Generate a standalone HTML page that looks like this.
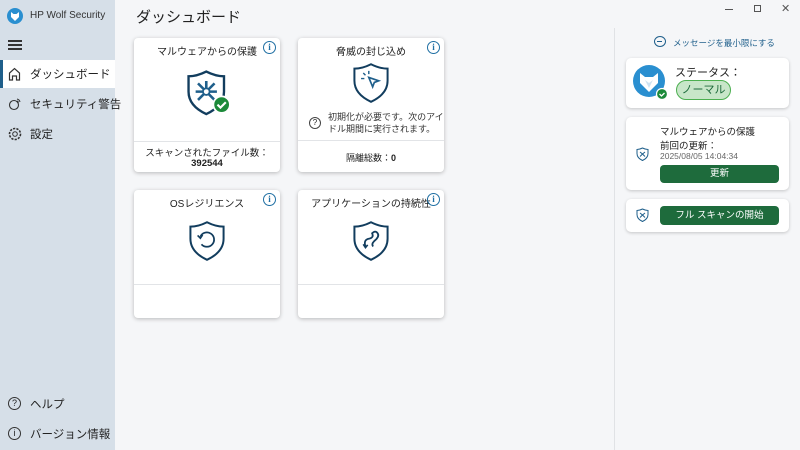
<!DOCTYPE html>
<html><head><meta charset="utf-8"><style>
*{margin:0;padding:0;box-sizing:border-box}
body{width:800px;height:450px;overflow:hidden;background:#f5f6f8;font-family:"Liberation Sans","Noto Sans CJK JP",sans-serif;color:#222;position:relative}
.side{position:absolute;left:0;top:0;width:115px;height:450px;background:#d6dfe8}
.abs{position:absolute}
.nav{position:absolute;left:0;width:115px;height:28px;font-size:11.5px;display:flex;align-items:center;padding-left:30px;white-space:nowrap}
.card{position:absolute;background:#fff;border-radius:4px;box-shadow:0 1px 4px rgba(0,0,0,.25)}
.ttl{position:absolute;top:5px;left:0;right:0;text-align:center;font-size:10px}
.info{position:absolute;right:4px;top:3px;width:13px;height:13px;border:1.3px solid #1f6fa3;border-radius:50%;color:#1f6fa3;font-size:9px;font-weight:bold;text-align:center;line-height:11px;font-family:"Liberation Serif",serif}
.div{position:absolute;left:0;right:0;height:1px;background:#e2e4e7}
.rc{position:absolute;left:626px;width:163px;background:#fff;border-radius:5px;box-shadow:0 1px 3px rgba(0,0,0,.2)}
.btn{position:absolute;background:#1e6b3c;color:#fff;border-radius:4px;font-size:9.5px;text-align:center}
</style></head><body>
<div class="side">
 <svg class="abs" style="left:7px;top:8px" width="16" height="16" viewBox="0 0 16 16"><circle cx="8" cy="8" r="8" fill="#2a8fd0"/><path d="M4 4l2.5 2h3L12 4v5l-4 4-4-4z" fill="#fff"/></svg>
 <div class="abs" style="left:30px;top:10px;font-size:10px;color:#333">HP Wolf Security</div>
 <div class="abs" style="left:8px;top:40px;width:14px;height:2px;background:#333;box-shadow:0 4px 0 #333,0 8px 0 #333"></div>
 <div class="nav" style="top:60px;background:#fff;border-left:3px solid #1f5f8b;padding-left:27px">ダッシュボード</div>
 <svg class="abs" style="left:8px;top:67px" width="13" height="14" viewBox="0 0 13 14"><path d="M1.5 13V6L6.5 1.5 11.5 6V13H8.5V9H4.5V13Z" fill="none" stroke="#333" stroke-width="1.2"/></svg>
 <div class="nav" style="top:90px">セキュリティ警告</div>
 <svg class="abs" style="left:8px;top:97px" width="14" height="14" viewBox="0 0 14 14"><circle cx="6" cy="8" r="4.5" fill="none" stroke="#333" stroke-width="1.1"/><path d="M9 2a4 4 0 0 1 3 3M9 4a2 2 0 0 1 1.5 1.5" fill="none" stroke="#333"/></svg>
 <div class="nav" style="top:120px">設定</div>
 <svg class="abs" style="left:8px;top:127px" width="14" height="14" viewBox="0 0 14 14"><circle cx="7" cy="7" r="2.3" fill="none" stroke="#333"/><circle cx="7" cy="7" r="5.5" fill="none" stroke="#333" stroke-dasharray="2.2 1.2" stroke-width="1.6"/></svg>
 <div class="nav" style="top:390px">ヘルプ</div>
 <div class="abs" style="left:8px;top:397px;width:13px;height:13px;border:1.2px solid #333;border-radius:50%;font-size:9px;text-align:center;line-height:11px">?</div>
 <div class="nav" style="top:420px">バージョン情報</div>
 <div class="abs" style="left:8px;top:427px;width:13px;height:13px;border:1.2px solid #333;border-radius:50%;font-size:9px;text-align:center;line-height:11px">i</div>
</div>
<div class="abs" style="left:136px;top:6px;font-size:15px">ダッシュボード</div>
<div class="abs" style="left:725px;top:9px;width:8px;height:1px;background:#555"></div>
<div class="abs" style="left:754px;top:5px;width:7px;height:7px;border:1px solid #555"></div>
<div class="abs" style="left:781px;top:2px;font-size:11px;color:#555">✕</div>

<div class="card" style="left:134px;top:38px;width:146px;height:134px">
 <div class="ttl">マルウェアからの保護</div><div class="info">i</div>
 <svg class="abs" style="left:52px;top:30px" width="50" height="52" viewBox="0 0 42 44"><path d="M17 3Q9 7 2 7v13q0 12 15 19q15-7 15-19V7q-7 0-15-4z" fill="none" stroke="#123d5e" stroke-width="2"/><g stroke="#1f5f8b" stroke-width="2.2"><path d="M17 20L10 13M17 20L24 13M17 20L10 27M17 20L24 27M17 20L17 11M17 20L26 20M17 20L8 20"/></g><circle cx="17" cy="20" r="2.8" fill="#fff" stroke="#1f5f8b" stroke-width="1.5"/><circle cx="30" cy="31" r="7" fill="#1c8a3a" stroke="#fff" stroke-width="1.5"/><path d="M26.5 31l2.5 2.5 4.5-4.5" stroke="#fff" stroke-width="1.8" fill="none"/></svg>
 <div class="div" style="top:103px"></div>
 <div class="abs" style="left:0;right:0;top:107px;text-align:center;font-size:9.5px">スキャンされたファイル数：</div>
 <div class="abs" style="left:0;right:0;top:120px;text-align:center;font-size:9.5px;font-weight:bold">392544</div>
</div>
<div class="card" style="left:298px;top:38px;width:146px;height:134px">
 <div class="ttl">脅威の封じ込め</div><div class="info">i</div>
 <svg class="abs" style="left:53px;top:24px" width="40" height="42" viewBox="0 0 36 38"><path d="M18 2Q10 6 3 6v11q0 12 15 19q15-7 15-19V6q-7 0-15-4z" fill="none" stroke="#123d5e" stroke-width="1.8"/><path d="M16 14l9 3-4 1.5-1.5 4z" fill="none" stroke="#1f5f8b" stroke-width="1.5"/><path d="M13 12l-2-2M16 11v-3M12 15h-3" stroke="#1f5f8b" stroke-width="1.3"/></svg>
 <div class="abs" style="left:11px;top:79px;width:12px;height:12px;border:1px solid #444;border-radius:50%;font-size:8px;text-align:center;line-height:10px">?</div>
 <div class="abs" style="left:30px;top:73px;font-size:9px;line-height:12px;color:#333">初期化が必要です。次のアイ<br>ドル期間に実行されます。</div>
 <div class="div" style="top:102px"></div>
 <div class="abs" style="left:0;right:0;top:113px;text-align:center;font-size:9px">隔離総数：<b>0</b></div>
</div>
<div class="card" style="left:134px;top:190px;width:146px;height:128px">
 <div class="ttl">OSレジリエンス</div><div class="info">i</div>
 <svg class="abs" style="left:53px;top:30px" width="40" height="42" viewBox="0 0 36 38"><path d="M18 2Q10 6 3 6v11q0 12 15 19q15-7 15-19V6q-7 0-15-4z" fill="none" stroke="#123d5e" stroke-width="1.8"/><path d="M12 15a6.5 6.5 0 1 1 1 7" fill="none" stroke="#123d5e" stroke-width="1.6"/><path d="M9.5 14l2.5 2.5 2-3" fill="none" stroke="#123d5e" stroke-width="1.5"/></svg>
 <div class="div" style="top:94px"></div>
</div>
<div class="card" style="left:298px;top:190px;width:146px;height:128px">
 <div class="ttl">アプリケーションの持続性</div><div class="info">i</div>
 <svg class="abs" style="left:53px;top:30px" width="40" height="42" viewBox="0 0 36 38"><path d="M18 2Q10 6 3 6v11q0 12 15 19q15-7 15-19V6q-7 0-15-4z" fill="none" stroke="#123d5e" stroke-width="1.8"/><path d="M13 24q-2-6 3-7t3-5q3-3 5 0t-3 7q-3 3-1 5" fill="none" stroke="#123d5e" stroke-width="1.6"/><path d="M11 22l2 3 2-2.5" fill="none" stroke="#123d5e" stroke-width="1.5"/></svg>
 <div class="div" style="top:94px"></div>
</div>

<div class="abs" style="left:614px;top:28px;width:1px;height:422px;background:#e0e2e5"></div>
<div class="abs" style="left:654px;top:36px;width:12px;height:11px;border:1.2px solid #1f5f8b;border-radius:50%"></div>
<div class="abs" style="left:657px;top:41px;width:5px;height:1px;background:#1f5f8b"></div>
<div class="abs" style="left:673px;top:37px;font-size:8.5px;color:#1f5f8b">メッセージを最小限にする</div>
<div class="rc" style="top:58px;height:50px">
 <svg class="abs" style="left:7px;top:7px" width="36" height="36" viewBox="0 0 36 36"><circle cx="16" cy="16" r="16" fill="#2a8fd0"/><path d="M7 8l5 4h8l5-4v10l-9 9-9-9z" fill="#fff"/><path d="M12 15l4 3 4-3-4 8z" fill="#cfe3f2"/><circle cx="29" cy="29" r="5.5" fill="#1c8a3a" stroke="#fff" stroke-width="1.2"/><path d="M26.5 29l2 2 3-3" stroke="#fff" stroke-width="1.3" fill="none"/></svg>
 <div class="abs" style="left:49px;top:6px;font-size:11px">ステータス：</div>
 <div class="abs" style="left:50px;top:22px;width:55px;height:20px;border:1.2px solid #4caf50;background:#c8e6c9;border-radius:10px;font-size:11px;color:#1e6b3c;text-align:center;line-height:18px">ノーマル</div>
</div>
<div class="rc" style="top:117px;height:73px">
 <svg class="abs" style="left:10px;top:30px" width="13" height="14" viewBox="0 0 13 14"><path d="M6.5 1Q3.5 2.5 1 2.5v4q0 4.5 5.5 7q5.5-2.5 5.5-7v-4Q9.5 2.5 6.5 1z" fill="none" stroke="#1f5f8b"/><path d="M6.5 7L4 5M6.5 7L9 5M6.5 7L4 9.5M6.5 7L9 9.5" stroke="#1f5f8b"/></svg>
 <div class="abs" style="left:34px;top:7px;font-size:9.5px">マルウェアからの保護</div>
 <div class="abs" style="left:34px;top:21px;font-size:9.5px">前回の更新：</div>
 <div class="abs" style="left:34px;top:34px;font-size:8.5px;color:#666">2025/08/05 14:04:34</div>
 <div class="btn" style="left:34px;top:48px;width:119px;height:18px;line-height:18px">更新</div>
</div>
<div class="rc" style="top:199px;height:33px">
 <svg class="abs" style="left:10px;top:9px" width="13" height="14" viewBox="0 0 13 14"><path d="M6.5 1Q3.5 2.5 1 2.5v4q0 4.5 5.5 7q5.5-2.5 5.5-7v-4Q9.5 2.5 6.5 1z" fill="none" stroke="#1f5f8b"/><path d="M6.5 7L4 5M6.5 7L9 5M6.5 7L4 9.5M6.5 7L9 9.5" stroke="#1f5f8b"/></svg>
 <div class="btn" style="left:34px;top:7px;width:119px;height:19px;line-height:19px">フル スキャンの開始</div>
</div>
</body></html>
